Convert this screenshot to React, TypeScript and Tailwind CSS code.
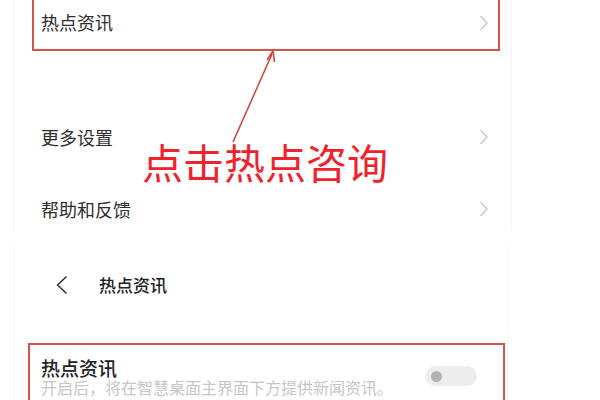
import React from "react";

const FONT = { fontFamily: '"Noto Sans CJK SC", "Noto Sans", sans-serif' };

function Chevron() {
  return (
    <svg width="10" height="16" viewBox="0 0 10 16" fill="none">
      <path d="M2 1.5 L8 8 L2 14.5" stroke="#c9c9c9" strokeWidth="1.4" strokeLinecap="round" strokeLinejoin="round" />
    </svg>
  );
}

function MenuRow({ label }: { label: string }) {
  return (
    <div className="flex h-[72px] shrink-0 items-center justify-between pl-[27px] pr-[22px]">
      <span className="text-[18px] text-[#2e2e2e]">{label}</span>
      <Chevron />
    </div>
  );
}

export default function App() {
  return (
    <div className="relative h-[400px] w-[600px] overflow-hidden bg-white" style={FONT}>
      {/* top screenshot: settings list */}
      <div className="ml-[13px] flex h-[231px] w-[499px] flex-col overflow-hidden border-x border-[#f3f3f3]">
        <div className="-mt-[10px] ml-[18px] flex h-[61px] w-[468px] shrink-0 items-center justify-between border-2 border-[#d4534d] pl-[7px] pr-[9px] pt-[4px]">
          <span className="text-[18px] text-[#2e2e2e]">热点资讯</span>
          <Chevron />
        </div>
        <div className="h-[50px] shrink-0" />
        <MenuRow label="更多设置" />
        <MenuRow label="帮助和反馈" />
      </div>

      {/* bottom screenshot: 热点资讯 page */}
      <div className="ml-[14px] mt-[14px] flex h-[160px] w-[494px] flex-col border-x border-[#f6f6f6]">
        <div className="flex h-[80px] shrink-0 items-center gap-[30px] pl-[40px]">
          <svg width="14" height="18" viewBox="0 0 14 18" fill="none">
            <path d="M11 1 L2.5 9 L11 17" stroke="#333333" strokeWidth="1.6" strokeLinecap="round" strokeLinejoin="round" />
          </svg>
          <span className="text-[17px] font-medium text-[#222222]">热点资讯</span>
        </div>
        <div className="h-[18px] shrink-0" />
        <div className="ml-[13px] flex h-[80px] w-[477px] shrink-0 items-start justify-between border-2 border-[#d4534d] pl-[11px] pr-[26px] pt-[13px]">
          <div className="flex flex-col">
            <span className="text-[19px] font-medium leading-[20px] text-[#222222]">热点资讯</span>
            <span className="text-[16px] leading-[18px] text-[#c6c6c6]">开启后，将在智慧桌面主界面下方提供新闻资讯。</span>
          </div>
          <div className="mt-[8px] flex h-[20px] w-[52px] items-center rounded-full bg-[#ededed] pl-[6px]">
            <div className="h-[11px] w-[11px] rounded-full bg-[#b3b3b3]" />
          </div>
        </div>
      </div>

      {/* annotation: arrow and caption */}
      <svg className="absolute left-0 top-0" width="600" height="400" viewBox="0 0 600 400" fill="none">
        <line x1="233" y1="142" x2="272" y2="54" stroke="#d6423c" strokeWidth="1.6" />
        <path d="M267 60 L273 51 L274.5 62" stroke="#d6423c" strokeWidth="1.6" fill="none" />
      </svg>
      <span className="absolute left-[142px] top-[136px] text-[41px] leading-[50px] text-[#f2222d]">点击热点咨询</span>
    </div>
  );
}
